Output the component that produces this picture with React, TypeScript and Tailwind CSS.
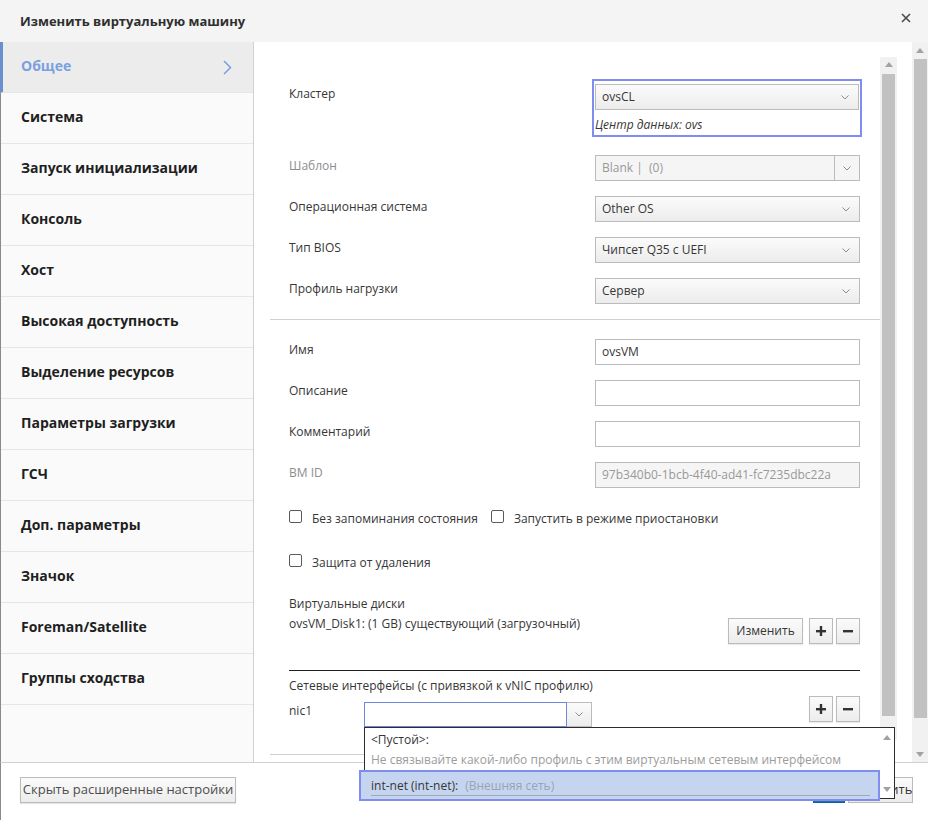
import React from 'react';

const NAV_ITEMS = [
  'Общее',
  'Система',
  'Запуск инициализации',
  'Консоль',
  'Хост',
  'Высокая доступность',
  'Выделение ресурсов',
  'Параметры загрузки',
  'ГСЧ',
  'Доп. параметры',
  'Значок',
  'Foreman/Satellite',
  'Группы сходства',
];

function Chevron() {
  return (
    <svg width="8" height="5" viewBox="0 0 8 5">
      <polyline points="0.5,0.5 4,4 7.5,0.5" fill="none" stroke="#8c8c8c" strokeWidth="1" />
    </svg>
  );
}

function Arrow({ down = false }: { down?: boolean }) {
  return (
    <svg width="8" height="5" viewBox="0 0 8 5">
      <polygon points={down ? '0,0 8,0 4,5' : '0,5 8,5 4,0'} fill="#a3a3a3" />
    </svg>
  );
}

function Select({ value, width = 'w-[265px]' }: { value: string; width?: string }) {
  return (
    <div
      className={`flex h-[26px] ${width} items-center justify-between border border-[#bbbbbb] bg-linear-to-b from-[#fbfbfb] to-[#ececec] pl-[6px] pr-[9px] text-[12px] text-[#363636]`}
    >
      <span>{value}</span>
      <Chevron />
    </div>
  );
}

function Input({ value = '', disabled = false }: { value?: string; disabled?: boolean }) {
  return (
    <div
      className={`flex h-[26px] w-[265px] items-center border border-[#bbbbbb] px-[6px] ${
        disabled ? 'bg-[#f5f5f5] text-[#999999]' : 'bg-white text-[#363636]'
      }`}
    >
      {value}
    </div>
  );
}

function Row({ label, disabled = false, className = '', children }: { label: string; disabled?: boolean; className?: string; children: React.ReactNode }) {
  return (
    <div className={`flex pl-[19px] ${className}`}>
      <div className={`w-[306px] pt-[2px] leading-[17px] ${disabled ? 'text-[#8b8d8f]' : ''}`}>{label}</div>
      {children}
    </div>
  );
}

function Checkbox({ label }: { label: string }) {
  return (
    <div className="flex items-start">
      <span className="mt-px h-[13px] w-[13px] rounded-[2px] border border-[#5a5a5a] bg-white" />
      <span className="ml-[10px] leading-[20px]">{label}</span>
    </div>
  );
}

function IconButton({ minus = false }: { minus?: boolean }) {
  return (
    <button className="flex h-[26px] w-[24px] items-center justify-center border border-[#bbbbbb] bg-linear-to-b from-[#fbfbfb] to-[#ececec] shadow-[0_1px_1px_rgba(0,0,0,0.08)]">
      <svg width="10" height="10" viewBox="0 0 10 10">
        <rect x="0" y="4" width="10" height="2.4" fill="#333" />
        {!minus && <rect x="3.8" y="0" width="2.4" height="10" fill="#333" />}
      </svg>
    </button>
  );
}

function Sidebar() {
  return (
    <nav className="w-[253px] shrink-0 border-r border-[#d1d1d1] bg-[#fafafa]">
      {NAV_ITEMS.map((item, i) =>
        i === 0 ? (
          <div
            key={item}
            className="-ml-px flex h-[51px] items-center justify-between border-b border-l-[3px] border-b-[#e6e6e6] border-l-[#6a8fce] bg-[#ececec] pb-[4px] pl-[18px] pr-[21px]"
          >
            <span className="text-[14px] font-bold text-[#7aa0e0]">{item}</span>
            <svg width="9" height="15" viewBox="0 0 9 15" className="mt-[4px]">
              <polyline points="1,1 7.5,7.5 1,14" fill="none" stroke="#7aa0e0" strokeWidth="1.5" />
            </svg>
          </div>
        ) : (
          <div key={item} className="flex h-[51px] items-center border-b border-[#e6e6e6] pb-[4px] pl-[20px]">
            <span className="text-[14px] font-bold text-[#1f1f1f]">{item}</span>
          </div>
        )
      )}
    </nav>
  );
}

function Content() {
  return (
    <div className="w-[626px] shrink-0 pl-[16px] pt-[37px]">
      <div className="flex pl-[19px]">
        <div className="w-[303px] pt-[6px] leading-[17px]">Кластер</div>
        <div className="h-[58px] w-[270px] border-2 border-[#7f8cf0] pl-px pt-[3px]">
          <Select value="ovsCL" width="w-[264px]" />
          <div className="mt-[6px] italic leading-[17px]">Центр данных: ovs</div>
        </div>
      </div>

      <Row label="Шаблон" disabled className="mt-[18px]">
        <div className="flex h-[26px] w-[265px] border border-[#bbbbbb] bg-[#f5f5f5] text-[#999999]">
          <span className="flex flex-1 items-center pl-[6px]">Blank |&nbsp; (0)</span>
          <span className="flex w-[25px] items-center justify-center border-l border-[#bbbbbb]">
            <Chevron />
          </span>
        </div>
      </Row>
      <Row label="Операционная система" className="mt-[15px]">
        <Select value="Other OS" />
      </Row>
      <Row label="Тип BIOS" className="mt-[15px]">
        <Select value="Чипсет Q35 с UEFI" />
      </Row>
      <Row label="Профиль нагрузки" className="mt-[15px]">
        <Select value="Сервер" />
      </Row>

      <div className="mt-[15px] h-px bg-[#d1d1d1]" />

      <Row label="Имя" className="mt-[19px]">
        <Input value="ovsVM" />
      </Row>
      <Row label="Описание" className="mt-[15px]">
        <Input />
      </Row>
      <Row label="Комментарий" className="mt-[15px]">
        <Input />
      </Row>
      <Row label="ВМ ID" disabled className="mt-[15px]">
        <Input value="97b340b0-1bcb-4f40-ad41-fc7235dbc22a" disabled />
      </Row>

      <div className="mt-[21px] flex gap-[13px] pl-[19px]">
        <Checkbox label="Без запоминания состояния" />
        <Checkbox label="Запустить в режиме приостановки" />
      </div>
      <div className="mt-[24px] flex pl-[19px]">
        <Checkbox label="Защита от удаления" />
      </div>

      <div className="mt-[21px] flex justify-between pl-[19px] pr-[20px]">
        <div className="leading-[20px]">
          <div>Виртуальные диски</div>
          <div>ovsVM_Disk1: (1 GB) существующий (загрузочный)</div>
        </div>
        <div className="mt-[24px] flex">
          <button className="h-[26px] w-[75px] border border-[#bbbbbb] bg-linear-to-b from-[#fbfbfb] to-[#ececec] text-[12px] text-[#363636] shadow-[0_1px_1px_rgba(0,0,0,0.08)]">
            Изменить
          </button>
          <div className="ml-[6px] flex gap-[3px]">
            <IconButton />
            <IconButton minus />
          </div>
        </div>
      </div>

      <div className="ml-[19px] mr-[20px] mt-[26px] h-px bg-[#1f1f1f]" />

      <div className="mt-[6px] pl-[19px] leading-[17px]">Сетевые интерфейсы (с привязкой к vNIC профилю)</div>
      <div className="mt-[2px] flex items-start justify-between pl-[19px] pr-[20px]">
        <div className="mt-[6px] flex items-start">
          <div className="w-[75px] leading-[17px]">nic1</div>
          <div className="h-[25px] w-[203px] border border-[#6d88de] bg-white" />
          <div className="flex h-[25px] w-[25px] items-center justify-center border border-l-0 border-[#bbbbbb] bg-linear-to-b from-[#fbfbfb] to-[#ececec]">
            <Chevron />
          </div>
        </div>
        <div className="flex gap-[3px]">
          <IconButton />
          <IconButton minus />
        </div>
      </div>

      <div className="mt-[27px] h-px bg-[#d1d1d1]" />
    </div>
  );
}

export default function App() {
  return (
    <div className="relative flex h-[820px] w-[928px] flex-col overflow-hidden bg-white font-['Open_Sans',sans-serif] text-[12px] text-[#363636]">
      <header className="flex h-[42px] shrink-0 justify-between bg-[#f4f4f4] pl-[20px] pr-[17px]">
        <h1 className="mt-[11px] text-[13px] font-bold leading-[20px] text-[#2f2f2f]">Изменить виртуальную машину</h1>
        <svg width="10" height="10" viewBox="0 0 10 10" className="mt-[13px]">
          <path d="M1 1 L9 9 M9 1 L1 9" stroke="#4a4a4a" strokeWidth="1.6" />
        </svg>
      </header>

      <div className="flex h-[720px] shrink-0 border-l border-[#8a8a8a]">
        <Sidebar />
        <Content />
        <div className="w-[17px] shrink-0 pt-[15px]">
          <div className="flex h-[683px] flex-col items-center bg-[#f1f1f1]">
            <div className="flex h-[16px] items-center">
              <Arrow />
            </div>
            <div className="mt-px h-[643px] w-[13px] bg-[#c1c1c1]" />
            <div className="mt-[8px] flex h-[16px] items-center">
              <Arrow down />
            </div>
          </div>
        </div>
        <div className="w-[15px] shrink-0" />
        <div className="flex w-[16px] shrink-0 flex-col items-center bg-[#f1f1f1]">
          <div className="flex h-[16px] items-center">
            <Arrow />
          </div>
          <div className="mt-px h-[659px] w-[13px] bg-[#c1c1c1]" />
          <div className="flex-1" />
          <div className="flex h-[16px] items-center">
            <Arrow down />
          </div>
        </div>
      </div>

      <footer className="flex flex-1 items-start justify-between border-l border-t border-l-[#8a8a8a] border-t-[#d1d1d1] pl-[19px] pr-[15px] pt-[14px]">
        <button className="h-[26px] w-[216px] border border-[#bbbbbb] bg-linear-to-b from-[#fbfbfb] to-[#ececec] text-[13px] text-[#4d4d4d] shadow-[0_1px_1px_rgba(0,0,0,0.1)]">
          Скрыть расширенные настройки
        </button>
        <div className="flex gap-[3px]">
          <button className="h-[26px] w-[32px] border border-[#00659c] bg-[#2f6ea5] text-[13px] text-white">OK</button>
          <button className="h-[26px] w-[65px] border border-[#bbbbbb] bg-linear-to-b from-[#fbfbfb] to-[#ececec] text-[13px] text-[#363636]">
            Отменить
          </button>
        </div>
      </footer>

      {/* открытый выпадающий список vNIC профилей */}
      <div className="absolute left-[364px] top-[727px] h-[72px] w-[531px] border border-[#2d2d2d] bg-white">
        <div className="pl-[6px] pt-[2px] leading-[20px]">
          <div className="text-[#363636]">&lt;Пустой&gt;:</div>
          <div className="text-[#9c9c9c]">Не связывайте какой-либо профиль с этим виртуальным сетевым интерфейсом</div>
        </div>
        <div className="absolute right-0 top-0 flex h-full w-[14px] flex-col items-center justify-between pb-[6px] pt-[7px]">
          <Arrow />
          <Arrow down />
        </div>
      </div>
      <div className="absolute left-[359px] top-[770px] flex h-[31px] w-[521px] items-center border-2 border-[#7f8cf0] bg-[#c5d5f0] pl-[10px]">
        <span className="text-[#363636]">int-net (int-net):</span>
        <span className="ml-[7px] text-[#9aa3b5]">(Внешняя сеть)</span>
        <div className="absolute bottom-[3px] left-[10px] right-[8px] h-px bg-[#a3a8b3]" />
      </div>
    </div>
  );
}
